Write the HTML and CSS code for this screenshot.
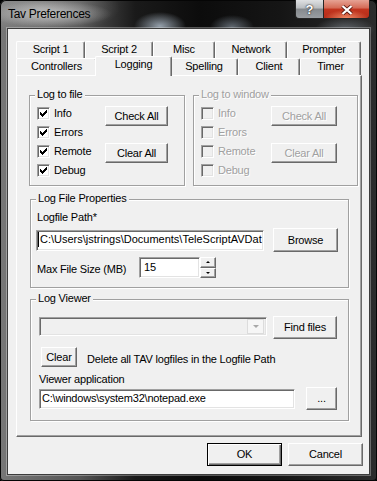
FILE: index.html
```html
<!DOCTYPE html>
<html lang="en">
<head>
<meta charset="UTF-8">
<meta name="viewport" content="width=device-width, initial-scale=1.0">
<title>Tav Preferences</title>

<link rel="stylesheet" href="styles.css">
</head>

<body>

<div class="window">
  <div class="titlebar">
    <div class="title">Tav Preferences</div>
    <div class="caption-btns">
      <div class="cap help">?</div>
      <div class="cap close">
        <svg width="12" height="10" viewBox="0 0 12 10">
          <path d="M1.5 1 L10.5 9 M10.5 1 L1.5 9" stroke="#5a1a10" stroke-width="3.8" fill="none"/>
          <path d="M1.5 1 L10.5 9 M10.5 1 L1.5 9" stroke="#fff" stroke-width="2.3" fill="none"/>
        </svg>
      </div>
    </div>
  </div>

  <div class="client">
    <div class="tabrow">
      <div class="tab t-script1">Script 1</div>
      <div class="tab t-script2">Script 2</div>
      <div class="tab t-misc">Misc</div>
      <div class="tab t-network">Network</div>
      <div class="tab t-prompter">Prompter</div>
    </div>
    <div class="tabrow">
      <div class="tab t-controllers">Controllers</div>
      <div class="tab t-logging active">Logging</div>
      <div class="tab t-spelling">Spelling</div>
      <div class="tab t-client">Client</div>
      <div class="tab t-timer">Timer</div>
    </div>

    <div class="page">
      <div class="top-groups">
        <!-- log to file -->
        <div class="group g-file">
          <span class="caption">Log to file</span>
          <div class="checks">
            <label class="check"><span class="box"><svg width="13" height="13" viewBox="0 0 13 13" shape-rendering="crispEdges"><path d="M9 3h1v1h-1z M8 4h2v1h-2z M3 5h1v1h-1z M7 5h3v1h-3z M3 6h2v1h-2z M6 6h3v1h-3z M3 7h5v1h-5z M4 8h3v1h-3z M5 9h1v1h-1z" fill="#000"/></svg></span>Info</label>
            <label class="check"><span class="box"><svg width="13" height="13" viewBox="0 0 13 13" shape-rendering="crispEdges"><path d="M9 3h1v1h-1z M8 4h2v1h-2z M3 5h1v1h-1z M7 5h3v1h-3z M3 6h2v1h-2z M6 6h3v1h-3z M3 7h5v1h-5z M4 8h3v1h-3z M5 9h1v1h-1z" fill="#000"/></svg></span>Errors</label>
            <label class="check"><span class="box"><svg width="13" height="13" viewBox="0 0 13 13" shape-rendering="crispEdges"><path d="M9 3h1v1h-1z M8 4h2v1h-2z M3 5h1v1h-1z M7 5h3v1h-3z M3 6h2v1h-2z M6 6h3v1h-3z M3 7h5v1h-5z M4 8h3v1h-3z M5 9h1v1h-1z" fill="#000"/></svg></span>Remote</label>
            <label class="check"><span class="box"><svg width="13" height="13" viewBox="0 0 13 13" shape-rendering="crispEdges"><path d="M9 3h1v1h-1z M8 4h2v1h-2z M3 5h1v1h-1z M7 5h3v1h-3z M3 6h2v1h-2z M6 6h3v1h-3z M3 7h5v1h-5z M4 8h3v1h-3z M5 9h1v1h-1z" fill="#000"/></svg></span>Debug</label>
          </div>
          <div class="btn-col">
            <button class="btn">Check All</button>
            <button class="btn">Clear All</button>
          </div>
        </div>

        <!-- log to window (disabled) -->
        <div class="group g-window disabled">
          <span class="caption">Log to window</span>
          <div class="checks">
            <label class="check"><span class="box"></span>Info</label>
            <label class="check"><span class="box"></span>Errors</label>
            <label class="check"><span class="box"></span>Remote</label>
            <label class="check"><span class="box"></span>Debug</label>
          </div>
          <div class="btn-col">
            <button class="btn">Check All</button>
            <button class="btn">Clear All</button>
          </div>
        </div>
      </div>

      <div class="group g-props">
        <span class="caption">Log File Properties</span>
        <div class="lbl">Logfile Path*</div>
        <div class="path-row">
          <div class="field path"><span class="caret"></span>C:\Users\jstrings\Documents\TeleScriptAVDat</div>
          <button class="btn browse">Browse</button>
        </div>
        <div class="size-row">
          <div class="lbl size-lbl">Max File Size (MB)</div>
          <div class="field size">15</div>
          <div class="spin-btns">
            <div class="spin-btn"><span class="arr-up"></span></div>
            <div class="spin-btn"><span class="arr-down"></span></div>
          </div>
        </div>
      </div>

      <div class="group g-viewer">
        <span class="caption">Log Viewer</span>
        <div class="find-row">
          <div class="combo"><span class="drop"><span class="arr-drop"></span></span></div>
          <button class="btn find">Find files</button>
        </div>
        <div class="clear-row">
          <button class="btn clear">Clear</button>
          <span class="clear-text">Delete all TAV logfiles in the Logfile Path</span>
        </div>
        <div class="lbl app-lbl">Viewer application</div>
        <div class="app-row">
          <div class="field app">C:\windows\system32\notepad.exe</div>
          <button class="btn dots">...</button>
        </div>
      </div>
    </div>

    <div class="dlg-btns">
      <button class="btn dlg default">OK</button>
      <button class="btn dlg">Cancel</button>
    </div>
  </div>
</div>

</body>
</html>
```

FILE: styles.css
```css
* {
  box-sizing: border-box;
}

body {
  margin: 0;
  background: #000;
  font-family: "Liberation Sans", Arial, sans-serif;
  font-size: 11px;
  line-height: 13px;
  letter-spacing: -0.2px;
  color: #000;
}

/* window frame */
.window {
  width: 377px;
  height: 481px;
  padding: 0 8px 7px;
  display: flex;
  flex-direction: column;
  border-radius: 6px 6px 4px 4px;
  overflow: hidden;
  box-shadow: inset 0 0 0 1px #050505;
  background:
    radial-gradient(ellipse 26px 14px at 160px 26px, rgba(190,205,220,.75), transparent),
    radial-gradient(ellipse 22px 12px at 232px 27px, rgba(160,175,190,.55), transparent),
    radial-gradient(ellipse 30px 12px at 345px 29px, rgba(150,160,170,.5), transparent),
    radial-gradient(ellipse 62px 13px at 50px 14px, rgba(215,215,215,.7), transparent),
    radial-gradient(ellipse 80px 26px at 40px 8px, rgba(190,190,190,.5), transparent),
    linear-gradient(to right, #777 0, #555 80px, #1a1a1a 135px, #0c0c0c 200px, #151515 280px, #2c2c2c 377px);
}

.titlebar {
  height: 29px;
  display: flex;
  justify-content: space-between;
  flex-shrink: 0;
}

.title {
  padding-top: 7px;
  font-size: 12px;
  line-height: 14px;
  letter-spacing: -0.3px;
  color: #000;
}

.caption-btns {
  display: flex;
  height: 19px;
  margin-right: -1px;
}

.cap {
  display: flex;
  align-items: center;
  justify-content: center;
  border: 1px solid #262626;
  border-top: none;
}

.help {
  width: 28px;
  border-right: none;
  border-radius: 0 0 0 4px;
  background: linear-gradient(#dfe1e3, #b9bcbf 45%, #85898d 50%, #9a9ea2);
  color: #fff;
  font-weight: bold;
  font-size: 13px;
  letter-spacing: 0;
  text-shadow: 0 0 2px #222, 0 0 1px #222;
}

.close {
  width: 47px;
  padding-top: 2px;
  border-radius: 0 0 4px 0;
  background:
    radial-gradient(ellipse 22px 8px at 50% 100%, rgba(255,160,120,.8), transparent),
    linear-gradient(#e6a394, #d46a55 45%, #c2351f 50%, #b42c18);
}

.client {
  flex: 1;
  background: #f0f0f0;
  padding: 12px 7px 0 8px;
  box-shadow: 0 0 0 1px #3c3c3c, 0 0 0 2px rgba(255,255,255,.3);
}

/* tabs */
.tabrow {
  display: flex;
  height: 17px;
}

.tab {
  height: 17px;
  padding-top: 1px;
  border: 1px solid;
  border-bottom: none;
  border-color: #fff #696969 #fff #fff;
  border-radius: 2px 2px 0 0;
  box-shadow: inset -1px 0 #a0a0a0;
  background: #f0f0f0;
  text-align: center;
  white-space: nowrap;
}

.t-script1 { width: 69px; }
.t-script2 { width: 68px; }
.t-misc { width: 62px; }
.t-network { width: 72px; }
.t-prompter { width: 74px; }
.t-controllers { width: 81px; }
.t-logging { width: 73px; }
.t-spelling { width: 68px; }
.t-client { width: 62px; }
.t-timer { width: 61px; }

.tab.active {
  position: relative;
  z-index: 1;
  width: 77px;
  height: 20px;
  margin: -2px -2px -1px;
}

.page {
  width: 346px;
  height: 362px;
  border: 1px solid;
  border-color: #fff #696969 #696969 #fff;
  box-shadow: inset -1px -1px #a0a0a0;
  padding: 19px 0 0 12px;
}

/* group boxes */
.top-groups {
  display: flex;
  gap: 8px;
}

.group {
  position: relative;
  border: 1px solid #a0a0a0;
  box-shadow: inset 1px 1px #fff, 1px 1px #fff;
}

.caption {
  position: absolute;
  top: -8px;
  left: 5px;
  padding: 0 2px;
  background: #f0f0f0;
  white-space: nowrap;
}

.g-file,
.g-window {
  height: 91px;
  display: flex;
  padding: 8px 0 0 7px;
}

.g-file { width: 156px; }
.g-window { width: 165px; }

.g-file .checks { width: 68px; }
.g-window .checks { width: 70px; }

.check {
  display: flex;
  align-items: center;
  gap: 4px;
  height: 19px;
}

.box {
  display: block;
  width: 13px;
  height: 13px;
  background: #fff;
  border: 1px solid;
  border-color: #a0a0a0 #fff #fff #a0a0a0;
  box-shadow: inset 1px 1px #696969, inset -1px -1px #e3e3e3;
}

.box svg {
  display: block;
  margin: -1px;
}

.btn-col {
  display: flex;
  flex-direction: column;
  gap: 17px;
  padding-top: 2px;
}

.btn {
  display: block;
  appearance: none;
  margin: 0;
  padding: 0;
  font: inherit;
  letter-spacing: inherit;
  color: #000;
  background: #f0f0f0;
  border: 1px solid;
  border-color: #fff #696969 #696969 #fff;
  box-shadow: inset -1px -1px #a0a0a0;
  text-align: center;
  white-space: nowrap;
}

.g-file .btn { width: 63px; height: 20px; }
.g-window .btn { width: 66px; height: 20px; }

.disabled,
.disabled .btn {
  color: #a0a0a0;
  text-shadow: 1px 1px #fff;
}

.disabled .box {
  background: #f0f0f0;
}

/* text fields */
.field {
  background: #fff;
  border: 1px solid;
  border-color: #a0a0a0 #fff #fff #a0a0a0;
  box-shadow: inset 1px 1px #696969, inset -1px -1px #e3e3e3;
  white-space: nowrap;
  overflow: hidden;
  display: flex;
  align-items: center;
  padding-left: 2px;
}

.lbl {
  padding-left: 1px;
}

.g-props {
  width: 319px;
  height: 89px;
  margin: 13px 0 0 1px;
  padding: 11px 0 0 5px;
}

.path-row {
  display: flex;
  align-items: center;
  height: 24px;
  margin-top: 4px;
}

.path {
  width: 228px;
  height: 21px;
  padding-bottom: 2px;
  padding-left: 1px;
  letter-spacing: 0;
}

.caret {
  width: 1px;
  height: 15px;
  margin-right: 1px;
  background: #000;
  flex-shrink: 0;
}

.browse {
  width: 65px;
  height: 24px;
  margin-left: 9px;
}

.size-row {
  display: flex;
  align-items: center;
  height: 21px;
  margin-top: 5px;
}

.size-lbl {
  width: 103px;
  padding-top: 3px;
}

.size {
  width: 61px;
  height: 21px;
  padding-left: 4px;
}

.spin-btns {
  display: flex;
  flex-direction: column;
  width: 16px;
  height: 21px;
}

.spin-btn {
  flex: 1;
  display: flex;
  align-items: center;
  justify-content: center;
  background: #f0f0f0;
  border: 1px solid;
  border-color: #fff #696969 #696969 #fff;
  box-shadow: inset -1px -1px #a0a0a0;
}

.arr-up {
  border-left: 2px solid transparent;
  border-right: 2px solid transparent;
  border-bottom: 2px solid #000;
}

.arr-down {
  border-left: 2px solid transparent;
  border-right: 2px solid transparent;
  border-top: 2px solid #000;
}

.g-viewer {
  width: 319px;
  height: 122px;
  margin: 11px 0 0 1px;
  padding: 16px 0 0 8px;
}

.find-row {
  display: flex;
  align-items: flex-start;
}

.combo {
  width: 228px;
  height: 19px;
  margin-top: 1px;
  background: #f0f0f0;
  border: 1px solid;
  border-color: #a0a0a0 #fff #fff #a0a0a0;
  box-shadow: inset 1px 1px #696969, inset -1px -1px #e3e3e3;
  display: flex;
  justify-content: flex-end;
  padding: 1px 2px 1px 1px;
}

.drop {
  width: 17px;
  display: flex;
  align-items: center;
  justify-content: center;
  background: #f6f6f6;
  border: 1px solid #dcdcdc;
}

.arr-drop {
  border-left: 3px solid transparent;
  border-right: 3px solid transparent;
  border-top: 3px solid #a8a8a8;
}

.find {
  width: 64px;
  height: 23px;
  margin-left: 6px;
}

.clear-row {
  display: flex;
  align-items: flex-start;
  margin-top: 8px;
}

.clear {
  width: 36px;
  height: 20px;
  margin-left: 2px;
}

.clear-text {
  margin: 6px 0 0 10px;
  white-space: nowrap;
}

.app-lbl {
  margin-top: 6px;
  padding-left: 0;
}

.app-row {
  display: flex;
  align-items: flex-start;
  margin-top: 1px;
}

.app {
  width: 256px;
  height: 20px;
  margin-top: 2px;
  padding-bottom: 1px;
}

.dots {
  width: 31px;
  height: 23px;
  margin-left: 11px;
}

/* dialog buttons */
.dlg-btns {
  display: flex;
  justify-content: flex-end;
  gap: 6px;
  margin: 6px -1px 0 0;
}

.dlg {
  width: 75px;
  height: 23px;
}

.btn.default {
  border: 1px solid #000;
  box-shadow: inset 1px 1px #fff, inset -1px -1px #696969, inset -2px -2px #a0a0a0;
}
```
